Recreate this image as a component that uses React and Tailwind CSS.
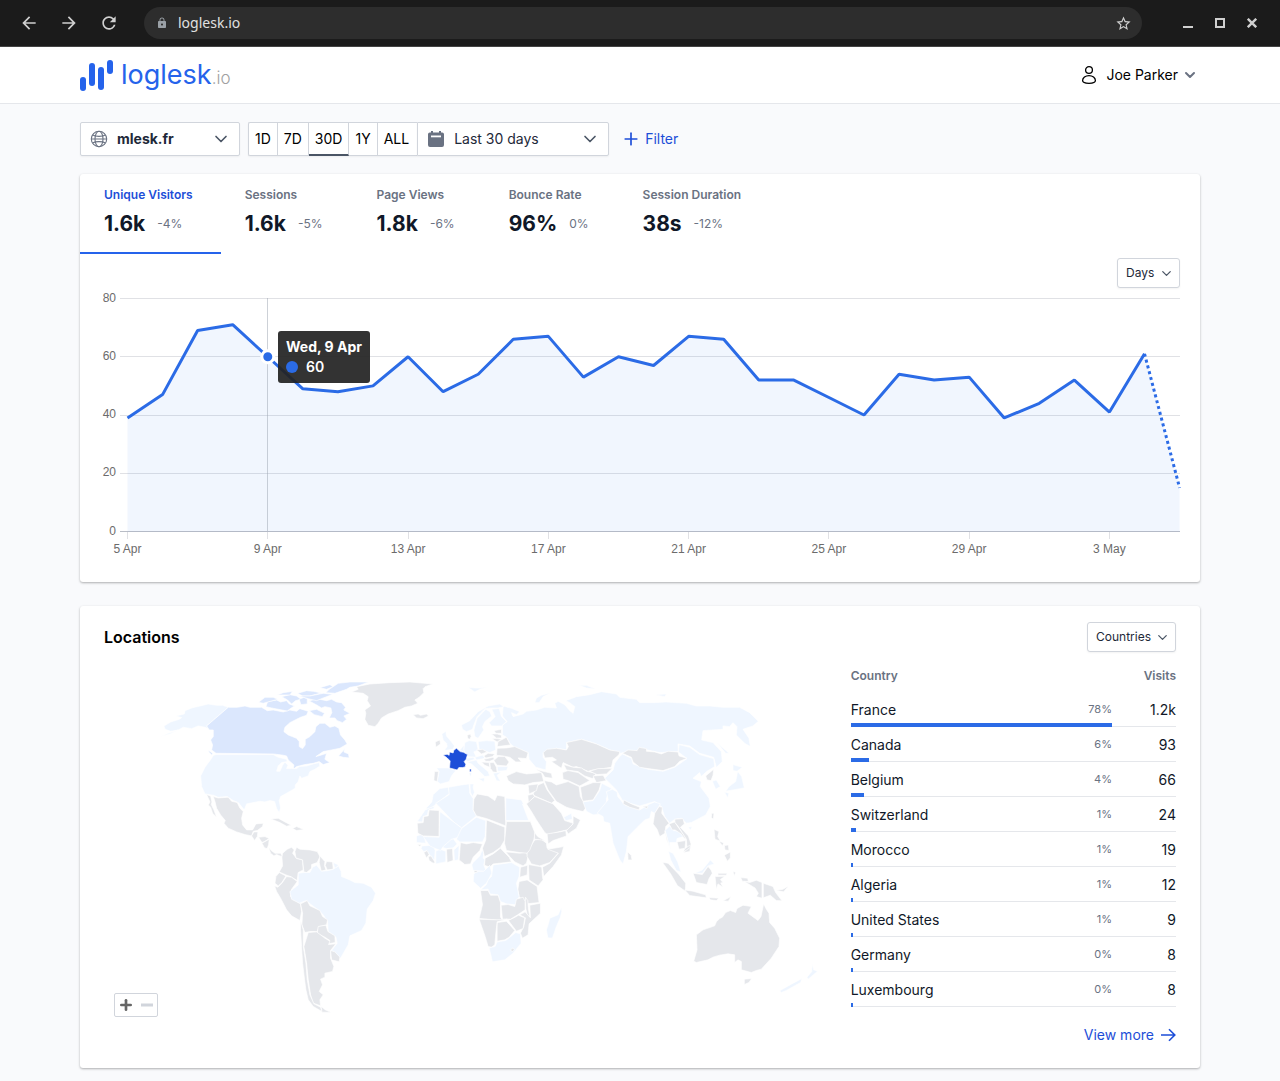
import React from 'react';
import { MdArrowBack, MdArrowForward, MdRefresh, MdLock, MdStarBorder } from 'react-icons/md';
import { ChevronDown, Plus } from 'lucide-react';

const metrics = [
  { label: 'Unique Visitors', value: '1.6k', change: '-4%' },
  { label: 'Sessions', value: '1.6k', change: '-5%' },
  { label: 'Page Views', value: '1.8k', change: '-6%' },
  { label: 'Bounce Rate', value: '96%', change: '0%' },
  { label: 'Session Duration', value: '38s', change: '-12%' },
];

const visitors = [
  39, 47, 69, 71, 60, 49, 48, 50, 60, 48, 54, 66, 67, 53, 60, 57, 67, 66, 52, 52, 46, 40, 54, 52, 53, 39, 44, 52, 41,
  61, 15,
];

const dateTicks = ['5 Apr', '9 Apr', '13 Apr', '17 Apr', '21 Apr', '25 Apr', '29 Apr', '3 May'];

const countries = [
  { name: 'France', percent: '78%', visits: '1.2k', bar: 100 },
  { name: 'Canada', percent: '6%', visits: '93', bar: 7 },
  { name: 'Belgium', percent: '4%', visits: '66', bar: 5 },
  { name: 'Switzerland', percent: '1%', visits: '24', bar: 2 },
  { name: 'Morocco', percent: '1%', visits: '19', bar: 1 },
  { name: 'Algeria', percent: '1%', visits: '12', bar: 1 },
  { name: 'United States', percent: '1%', visits: '9', bar: 1 },
  { name: 'Germany', percent: '0%', visits: '8', bar: 1 },
  { name: 'Luxembourg', percent: '0%', visits: '8', bar: 1 },
];

// Map fills, from no visits to most visits
const NONE = '#e5e7eb';
const LOW = '#eff6ff';
const MID = '#dbe7fd';
const HIGH = '#1d4ed8';

// Each region has its own origin, three units per map pixel
const regions = [
  {
    name: 'North America',
    x: 46,
    y: 6,
    shapes: [
      [LOW, 'M235 112 218 106 200 106 175 102 150 108 128 113 105 122 103 132 78 138 95 143 88 148 62 156 42 168 45 178 62 184 85 180 100 172 125 176 145 168 165 172 185 180 170 168Z'],
      [LOW, 'M32 200 55 190 85 180 60 192Z'],
      [MID, 'M235 112 262 112 285 108 300 112 335 112 352 122 370 120 400 126 420 120 440 124 450 116 475 124 470 136 452 142 440 148 420 158 405 172 402 185 415 195 440 205 448 215 448 230 458 236 466 225 466 208 480 200 495 185 498 170 510 160 525 160 540 172 555 168 567 175 572 195 585 210 592 222 570 235 545 240 520 245 498 260 515 255 530 250 525 268 540 278 520 284 508 275 490 280 465 284 440 290 430 298 432 285 415 270 410 258 395 255 370 252 198 250 185 240 188 225 182 210 190 200 190 180 178 180 170 168Z'],
      [MID, 'M566 258 575 248 585 236 582 246 596 252 598 264 580 262Z'],
      [MID, 'M174 240 188 250 186 256 178 248Z'],
      [MID, 'M478 93 500 86 530 92 545 88 560 96 575 98 587 112 582 120 600 130 582 138 590 148 578 158 562 152 555 144 538 144 546 128 543 114 525 110 515 114 502 106Z'],
      [MID, 'M353 95 380 90 392 96 410 92 418 102 434 108 424 114 412 123 385 118 365 114 348 110Z'],
      [MID, 'M326 97 345 82 370 82 384 88 357 95 340 100Z'],
      [MID, 'M395 80 420 74 440 78 454 88 437 92 425 102 413 90Z'],
      [MID, 'M448 88 462 82 472 86 472 102 453 104Z'],
      [MID, 'M382 75 400 68 428 64 420 75Z'],
      [MID, 'M443 70 470 62 490 64 514 69 480 78 458 78Z'],
      [MID, 'M448 78 480 78 520 70 549 73 520 84 500 92 475 86Z'],
      [MID, 'M510 53 540 44 550 50 530 58Z'],
      [MID, 'M538 58 565 40 600 36 656 36 625 48 600 52 590 58 555 70 528 68Z'],
      [MID, 'M478 122 500 118 524 130 517 140 493 134Z'],
      [NONE, 'M605 66 625 58 620 50 660 42 720 38 780 36 850 42 826 50 820 56 822 68 808 82 795 90 804 100 785 108 765 112 745 122 715 132 695 144 685 160 675 170 655 166 645 148 648 130 645 120 662 108 652 92 655 80 640 70Z'],
      [NONE, 'M790 134 805 132 812 136 830 132 836 138 820 146 800 144Z'],
      [LOW, 'M198 254 370 254 385 262 410 268 412 275 395 278 385 288 380 304 390 304 398 286 405 276 414 286 410 296 425 296 440 296 448 290 470 288 490 282 508 278 510 288 495 298 480 305 475 318 455 325 450 318 445 335 436 345 436 355 410 370 392 380 388 392 392 415 388 428 380 416 374 395 360 392 345 396 330 394 310 398 290 402 283 420 275 410 265 398 250 392 232 380 205 382 190 376 165 372 155 350 152 318 165 292 185 265 190 256Z'],
      [NONE, 'M190 380 205 384 235 382 245 394 262 398 270 415 280 425 275 445 278 465 290 480 308 480 318 462 340 460 338 470 322 482 310 484 305 498 285 494 260 486 235 475 222 460 226 452 212 435 200 415 195 395Z'],
      [NONE, 'M170 374 182 378 186 396 184 404 192 420 200 442 188 430 182 412 175 405 180 396Z'],
      [NONE, 'M305 498 312 486 324 486 322 500 314 512Z'],
      [NONE, 'M326 502 345 500 358 506 345 514 336 518Z'],
      [NONE, 'M336 520 358 508 356 524 352 536 344 534Z'],
      [NONE, 'M363 447 385 445 405 456 424 466 410 469 390 458Z'],
      [NONE, 'M428 476 440 470 462 479 440 482Z'],
    ],
  },
  {
    name: 'South America and southern Africa',
    x: 156,
    y: 166,
    shapes: [
      [NONE, 'M26 52 34 62 45 70 62 70 68 80 60 78 50 74 42 78 32 70Z'],
      [NONE, 'M66 82 68 70 82 58 95 52 103 60 98 70 110 86 128 90 130 120 115 128 112 152 92 140 78 135 58 126 68 108Z'],
      [NONE, 'M110 52 120 58 150 60 172 65 180 80 172 98 155 104 155 115 140 128 132 126 128 90 108 84 105 65Z'],
      [NONE, 'M180 78 195 95 194 108 198 120 184 124 178 98Z'],
      [NONE, 'M200 95 218 96 220 118 202 120 196 106Z'],
      [LOW, 'M220 98 236 105 225 118Z'],
      [NONE, 'M58 128 78 138 66 158 55 168 45 160 48 140Z'],
      [NONE, 'M44 168 54 172 66 160 80 140 95 142 112 155 95 178 92 200 112 215 122 222 125 245 120 272 95 258 80 240 62 205 50 185Z'],
      [LOW, 'M115 130 132 128 150 128 158 112 170 106 185 124 205 122 220 118 236 108 244 125 245 140 270 150 285 158 310 160 335 172 347 190 340 212 322 238 318 280 305 302 270 318 265 345 242 385 215 362 232 340 228 322 205 305 203 275 190 255 175 240 148 220 140 212 118 220 95 208 90 185 115 165Z'],
      [NONE, 'M122 222 142 212 150 228 180 242 188 260 203 270 200 285 178 290 172 305 150 305 135 308 126 285 128 250Z'],
      [NONE, 'M175 290 198 286 204 305 225 318 226 338 205 342 210 332 195 322 172 310Z'],
      [NONE, 'M212 362 225 366 240 382 238 396 215 390Z'],
      [NONE, 'M145 308 170 306 195 325 210 334 206 344 228 342 212 362 212 385 222 410 218 425 195 430 195 442 182 448 188 465 178 485 190 495 180 510 182 528 160 520 152 495 145 450 140 400 132 350Z'],
      [NONE, 'M122 272 130 300 130 350 138 400 142 450 150 495 162 522 182 532 186 545 160 530 145 510 138 480 134 450 128 400 125 350 122 300Z'],
      [NONE, 'M184 530 196 540 214 548 186 547Z'],
      [LOW, 'M470 18 484 14 494 20 498 40 470 38Z'],
      [NONE, 'M472 44 485 44 480 50Z'],
      [LOW, 'M486 48 520 46 526 62 524 92 510 76 500 62 492 66 484 56Z'],
      [NONE, 'M492 68 502 62 508 74 500 84Z'],
      [NONE, 'M505 80 514 78 526 98 520 100 508 92Z'],
      [LOW, 'M528 64 540 58 558 64 558 96 528 102Z'],
      [LOW, 'M545 52 560 35 580 26 592 42 580 54 560 56Z'],
      [NONE, 'M560 58 578 56 580 92 562 98Z'],
      [LOW, 'M582 60 598 46 596 90 584 92Z'],
      [NONE, 'M602 38 620 42 640 38 668 42 660 62 640 82 632 102 615 104 598 90 600 65Z'],
      [LOW, 'M640 98 660 78 668 58 672 70 670 85 676 88 672 105 680 125 640 122 636 105Z'],
      [NONE, 'M676 85 700 72 722 55 748 82 755 96 720 100 700 102 690 112 674 106Z'],
      [NONE, 'M738 66 780 70 800 66 805 80 800 100 790 108 765 96 750 80Z'],
      [NONE, 'M802 62 812 50 825 30 845 28 860 40 862 55 890 62 895 70 870 98 840 108 815 102 802 80Z'],
      [NONE, 'M864 58 912 50 905 75 880 110 852 140 848 112 870 100 896 70Z'],
      [NONE, 'M806 104 840 110 846 112 848 140 850 150 835 168 808 150Z'],
      [NONE, 'M782 112 804 106 802 135 780 142Z'],
      [NONE, 'M778 155 802 150 832 170 838 218 800 222 778 200 774 180Z'],
      [LOW, 'M700 105 725 102 755 98 780 112 778 140 770 160 778 200 768 225 740 222 722 215 715 195 690 192 685 178 662 180 680 164 684 150 695 140Z'],
      [LOW, 'M642 132 652 124 672 124 690 106 696 130 680 160 662 175 640 155Z'],
      [NONE, 'M643 122 652 122 652 128 643 128Z'],
      [NONE, 'M662 182 685 182 692 196 715 196 722 218 722 262 730 272 658 266 668 225Z'],
      [NONE, 'M724 226 745 224 765 230 770 208 790 202 796 215 796 240 775 254 752 268 728 268Z'],
      [NONE, 'M797 202 804 212 806 238 810 258 804 262 798 236Z'],
      [NONE, 'M810 226 842 220 842 250 808 282 805 315 788 325 782 310 792 290 797 264 780 255 796 246 812 264Z'],
      [NONE, 'M746 272 766 262 776 256 795 264 790 296 770 304Z'],
      [NONE, 'M712 278 740 274 765 302 748 322 735 330 712 334Z'],
      [NONE, 'M658 268 712 270 742 268 712 276 708 312 705 345 695 352 685 350 676 320Z'],
      [LOW, 'M688 354 706 350 712 336 738 332 768 308 782 312 784 340 760 370 735 390 698 396Z'],
      [NONE, 'M752 360 760 354 764 360 757 366Z'],
      [LOW, 'M905 232 895 255 870 265 866 282 860 300 864 324 878 325 890 290 902 262 906 245Z'],
    ],
  },
  {
    name: 'Europe, Russia and northern Africa',
    x: 306,
    y: 6,
    shapes: [
      [LOW, 'M280 108 305 115 330 125 320 134 305 128 310 140 340 132 350 124 380 120 405 112 440 114 435 100 445 94 465 104 480 122 490 130 495 110 480 98 468 92 500 80 540 74 575 65 620 72 630 82 680 88 690 98 730 98 770 96 830 100 860 108 900 108 940 112 990 112 1020 128 1046 154 1030 168 1000 178 1018 205 1022 230 1005 220 980 195 982 170 970 158 960 170 940 168 940 178 910 180 880 182 876 210 910 218 935 245 938 275 920 292 912 262 870 250 840 228 805 222 806 245 750 248 690 235 682 242 630 250 600 240 560 222 515 208 470 218 470 240 440 235 400 248 400 262 410 275 408 300 378 292 358 268 355 248 315 232 302 222 290 202 278 195 278 165 292 155 278 138Z'],
      [LOW, 'M375 98 380 84 395 76 424 68 400 80 388 98Z'],
      [LOW, 'M175 52 195 54 210 54 235 50 210 58 195 66Z'],
      [LOW, 'M508 46 530 46 560 58 530 54Z'],
      [LOW, 'M735 74 770 72 765 80Z'],
      [LOW, 'M155 165 180 152 205 125 235 108 270 102 282 110 265 114 245 114 225 116 202 140 192 165 188 178 170 185 158 178Z'],
      [LOW, 'M192 180 202 145 228 118 240 125 246 138 225 155 218 170 222 180 205 205 195 200Z'],
      [LOW, 'M246 118 268 115 275 140 290 155 275 168 245 168 238 158 256 140Z'],
      [NONE, 'M172 196 182 192 184 200 180 208 174 206Z'],
      [LOW, 'M96 192 108 184 110 198 124 215 134 228 130 238 103 242 112 230 110 220 100 210Z'],
      [NONE, 'M76 216 90 210 92 222 78 232Z'],
      [LOW, 'M150 240 162 226 164 248Z'],
      [LOW, 'M165 218 178 212 200 215 205 240 192 246 200 262 172 260 162 240Z'],
      [LOW, 'M205 215 230 212 255 214 258 240 240 248 208 238Z'],
      [LOW, 'M166 266 190 262 195 268 172 276Z'],
      [LOW, 'M195 262 220 255 225 265 200 270Z'],
      [LOW, 'M170 276 200 270 205 280 235 305 240 318 225 320 205 300 185 282Z'],
      [LOW, 'M205 326 225 324 222 336Z'],
      [LOW, 'M177 309 185 309 183 323Z'],
      [LOW, 'M80 294 115 294 138 302 125 318 118 335 92 342 82 335 88 305Z'],
      [NONE, 'M74 305 86 305 82 335 72 332Z'],
      [NONE, 'M245 192 262 192 275 196 275 204 260 204Z'],
      [NONE, 'M246 206 262 206 275 208 262 216Z'],
      [NONE, 'M253 182 275 178 275 190 258 190Z'],
      [NONE, 'M265 215 290 202 302 225 262 230Z'],
      [NONE, 'M200 240 218 238 232 246 215 252Z'],
      [NONE, 'M222 258 235 250 255 252 248 260 228 264Z'],
      [NONE, 'M222 268 250 262 254 268 240 274 228 274Z'],
      [NONE, 'M262 235 290 234 315 230 355 248 350 266 325 264 335 276 318 276 300 262 280 258 260 256Z'],
      [NONE, 'M252 272 265 260 285 260 298 276 290 288 262 286Z'],
      [NONE, 'M215 276 238 278 240 292 225 286Z'],
      [NONE, 'M240 278 252 278 260 292 262 308 250 306 242 296Z'],
      [LOW, 'M262 290 295 290 290 302 264 304Z'],
      [LOW, 'M250 310 275 306 262 316 272 335 260 332Z'],
      [HIGH, 'M100 255 112 253 118 256 119 246 130 249 132 241 140 235 151 245 161 247 173 254 169 268 163 275 168 283 166 291 158 293 147 293 142 300 119 294 121 273 112 264Z'],
      [HIGH, 'M179 297 184 297 184 306 179 305Z'],
      [NONE, 'M290 318 320 305 350 312 395 308 402 335 370 338 345 345 310 342 295 332Z'],
      [NONE, 'M378 298 400 304 425 310 428 325 405 322 398 310Z'],
      [NONE, 'M400 248 412 238 440 235 470 240 476 230 470 218 515 208 560 222 600 240 630 245 628 254 610 270 605 292 580 296 550 300 535 304 500 290 490 292 460 278 455 295 425 275 440 270 428 262 405 264Z'],
      [NONE, 'M462 284 490 292 515 294 530 304 560 310 548 326 525 318 505 305 470 300Z'],
      [NONE, 'M458 308 475 302 505 308 540 332 510 348 475 332 460 328Z'],
      [NONE, 'M540 304 565 296 608 295 590 312 562 314Z'],
      [NONE, 'M550 318 580 316 590 332 560 338Z'],
      [NONE, 'M512 352 550 338 574 338 568 360 550 390 518 394Z'],
      [NONE, 'M403 332 425 336 440 345 475 335 508 350 512 380 530 412 520 425 490 418 470 412 440 395 415 360Z'],
      [NONE, 'M385 345 402 338 412 360 435 392 425 400 375 378 370 372Z'],
      [NONE, 'M355 346 385 342 380 362 358 372Z'],
      [NONE, 'M354 376 370 372 374 380 356 398Z'],
      [NONE, 'M350 402 375 380 400 390 430 402 455 430 465 452 490 460 480 478 450 485 415 495 405 488 380 450 365 425Z'],
      [NONE, 'M412 492 450 486 468 482 470 498 430 512 415 522Z'],
      [NONE, 'M470 482 490 462 490 438 512 450 500 475 475 492Z'],
      [LOW, 'M462 442 485 430 488 448 468 452Z'],
      [LOW, 'M530 424 520 396 550 392 570 362 576 340 605 355 590 385 590 410 575 432 550 435Z'],
      [LOW, 'M90 356 115 352 120 370 78 402 60 420 48 416 66 396 70 374Z'],
      [LOW, 'M22 455 46 420 74 408 72 416 56 420 52 436 40 440 38 456Z'],
      [LOW, 'M78 400 118 374 116 352 155 345 178 342 180 370 190 386 190 420 200 438 155 474 130 455Z'],
      [LOW, 'M180 342 192 342 190 352 194 368 188 380 182 368Z'],
      [NONE, 'M202 372 235 378 255 392 262 376 285 380 288 468 230 446 200 438 190 420 192 388Z'],
      [LOW, 'M288 384 335 390 345 410 338 402 357 452 288 452Z'],
      [NONE, 'M22 460 40 458 42 440 55 438 58 420 88 422 88 500 40 498 24 490Z'],
      [LOW, 'M90 425 155 474 155 500 125 508 100 530 92 542 72 534 60 528 40 500 88 502Z'],
      [LOW, 'M155 476 200 442 228 452 226 500 218 516 150 516 140 508Z'],
      [NONE, 'M230 450 285 472 285 510 272 532 250 548 224 560 218 535 228 510Z'],
      [NONE, 'M290 455 362 455 376 490 372 510 360 540 352 550 330 548 290 542 284 520Z'],
      [NONE, 'M374 488 384 500 408 514 394 510 374 508Z'],
    ],
  },
  {
    name: 'East Asia',
    x: 496,
    y: 6,
    shapes: [
      [LOW, 'M68 252 95 265 100 282 145 298 190 304 225 292 262 266 236 246 238 224 270 232 300 254 342 266 345 290 322 304 304 320 300 308 280 325 305 335 302 350 328 385 332 410 318 435 275 458 260 460 245 445 225 448 210 460 195 440 185 410 165 395 120 408 70 395 50 360 15 325 40 300 45 280 60 260Z'],
      [NONE, 'M68 250 85 240 112 242 118 232 140 236 140 244 165 246 185 252 205 244 235 246 238 258 262 265 240 274 225 290 190 302 145 296 120 292 100 276 95 262Z'],
      [LOW, 'M10 440 -8 430 25 390 20 365 38 358 52 366 54 380 75 405 120 420 150 402 165 396 182 402 165 430 155 425 150 445 135 450 115 470 85 500 80 545 70 582 60 570 40 520 30 460 12 455Z'],
      [NONE, 'M72 390 95 402 120 412 118 420 90 412 70 402Z'],
      [NONE, 'M128 410 145 408 142 416Z'],
      [NONE, 'M165 430 178 410 188 412 186 430 208 460 198 470 196 490 180 500 172 478 160 462Z'],
      [LOW, 'M196 482 210 468 222 482 240 484 252 500 232 506 230 518 210 518 212 540Z'],
      [NONE, 'M208 462 225 456 234 470 256 500 258 510 244 492 226 480 218 480Z'],
      [NONE, 'M225 448 250 446 254 462 242 472 266 498 274 522 270 545 252 548 262 536 260 508 236 470 226 458Z'],
      [NONE, 'M232 516 258 512 256 535 238 538Z'],
      [NONE, 'M318 318 342 298 340 316 334 332 322 330Z'],
      [LOW, 'M338 334 350 330 362 350 348 358Z'],
      [LOW, 'M352 218 388 250 378 250Z'],
      [LOW, 'M400 284 428 292 412 304 400 302Z'],
      [LOW, 'M414 304 426 320 434 354 400 360 378 364 388 350 408 335Z'],
      [LOW, 'M374 366 388 370 384 384Z'],
      [NONE, 'M336 430 343 430 341 448 335 443Z'],
      [LOW, 'M266 472 278 470 272 480Z'],
      [NONE, 'M343 478 358 485 354 500 362 514 346 508Z'],
    ],
  },
  {
    name: 'Oceania',
    x: 496,
    y: 156,
    shapes: [
      [NONE, 'M84 96 94 106 97 120 85 120Z'],
      [NONE, 'M196 34 206 70 210 82 200 58Z'],
      [NONE, 'M358 63 372 69 368 78Z'],
      [NONE, 'M374 77 386 75 388 92 376 90Z'],
      [NONE, 'M374 106 392 96 392 114 383 124Z'],
      [NONE, 'M250 98 256 86 270 76 272 82Z'],
      [LOW, 'M206 94 220 100 234 126 244 157 230 152 213 120Z'],
      [NONE, 'M188 127 205 130 237 163 258 190 257 214 233 197 213 162Z'],
      [NONE, 'M255 210 280 214 318 225 320 234 270 227Z'],
      [NONE, 'M328 233 358 235 350 242 332 240Z'],
      [NONE, 'M370 243 394 230 386 244Z'],
      [LOW, 'M286 160 308 150 332 120 344 132 325 138 308 160Z'],
      [NONE, 'M280 160 308 164 325 140 334 150 338 160 328 176 322 194 290 188Z'],
      [NONE, 'M346 170 376 169 362 179 370 188 363 189 370 202 355 192 350 208Z'],
      [NONE, 'M355 160 382 160 380 166 355 166Z'],
      [NONE, 'M400 155 408 157 404 168Z'],
      [NONE, 'M423 173 444 175 446 185 428 184Z'],
      [NONE, 'M434 185 450 188 470 181 487 188 487 235 470 230 476 220 466 204Z'],
      [NONE, 'M491 190 520 200 528 218 547 243 530 242 512 226 491 234Z'],
      [NONE, 'M528 211 550 208 567 198 552 216Z'],
      [NONE, 'M290 345 310 330 345 318 350 306 360 296 368 292 378 278 392 272 408 278 412 266 430 256 455 260 445 280 475 302 484 290 492 252 500 268 508 280 510 308 525 325 540 355 538 380 515 415 485 448 470 452 455 458 425 450 425 425 415 420 405 428 405 405 385 402 360 406 340 412 325 420 290 428 282 424 292 390Z'],
      [NONE, 'M434 478 456 476 448 488 434 494Z'],
      [LOW, 'M638 432 642 450 654 454 640 466 626 478 622 472 636 456Z'],
      [LOW, 'M540 513 575 493 607 476 603 488 560 512 545 518Z'],
    ],
  },
];

const toX = (day) => 47.5 + day * 35.07;
const toY = (count) => 241.5 - count * 2.9125;

const toPath = (from, to) =>
  visitors
    .slice(from, to + 1)
    .map((count, i) => `${i === 0 ? 'M' : 'L'}${toX(from + i)} ${toY(count)}`)
    .join(' ');

const BrowserBar = () => (
  <div className="flex items-center h-[47px] px-[19px] bg-[#1b1b1b] border-b border-[#444444] text-[#d0d0d0]">
    <div className="flex items-center gap-5">
      <button type="button" aria-label="Back">
        <MdArrowBack size={20} />
      </button>
      <button type="button" aria-label="Forward">
        <MdArrowForward size={20} />
      </button>
      <button type="button" aria-label="Reload">
        <MdRefresh size={20} />
      </button>
    </div>
    <div className="flex flex-1 items-center gap-2.5 h-8 ml-[25px] pl-3 pr-2.5 rounded-full bg-[#2d2d2d]">
      <MdLock size={12} className="text-[#9aa0a6]" />
      <input
        type="text"
        aria-label="Address"
        defaultValue="loglesk.io"
        className="flex-1 min-w-0 bg-transparent text-sm text-[#e0e0e0] font-['Noto_Sans',sans-serif] focus:outline-none"
      />
      <button type="button" aria-label="Bookmark">
        <MdStarBorder size={17} />
      </button>
    </div>
    <div className="flex items-center gap-[22px] ml-[41px] mr-1">
      <button type="button" aria-label="Minimize">
        <svg width="10" height="10" viewBox="0 0 10 10" fill="currentColor">
          <rect y="8" width="10" height="2" />
        </svg>
      </button>
      <button type="button" aria-label="Maximize">
        <svg width="10" height="10" viewBox="0 0 10 10" fill="none" stroke="currentColor" strokeWidth="2">
          <rect x="1" y="1" width="8" height="8" />
        </svg>
      </button>
      <button type="button" aria-label="Close">
        <svg width="10" height="10" viewBox="0 0 10 10" stroke="currentColor" strokeWidth="2.4">
          <path d="M0.8 0.8 9.2 9.2M9.2 0.8 0.8 9.2" />
        </svg>
      </button>
    </div>
  </div>
);

const Logo = () => (
  <a href="#" className="flex items-center gap-2">
    <svg width="33" height="31" viewBox="0 0 33 31" fill="#2563eb" aria-hidden="true">
      <rect x="0" y="17" width="6" height="14" rx="3" />
      <rect x="9" y="3" width="6" height="23" rx="3" />
      <rect x="18" y="7" width="6" height="23" rx="3" />
      <rect x="27" y="0" width="6" height="14" rx="3" />
    </svg>
    <span className="flex items-baseline pt-0.5 text-[27px] leading-8 text-[#2563eb]">
      loglesk
      <span className="text-[17px] leading-8 font-light text-neutral-400">.io</span>
    </span>
  </a>
);

const Header = () => (
  <header className="bg-white border-b border-gray-200">
    <div className="flex items-center justify-between h-14 max-w-[1120px] mx-auto">
      <Logo />
      <button type="button" className="flex items-center pr-0.5 text-sm text-black">
        <svg
          width="18"
          height="20"
          viewBox="0 0 18 20"
          fill="none"
          stroke="currentColor"
          strokeWidth="1.3"
          className="mr-2"
        >
          <circle cx="9" cy="5" r="3.4" />
          <path d="M9 10.6c-3.600 0-6.400 2.200-6.400 5 0 1.900 2.400 2.800 6.400 2.800s6.400-.9 6.400-2.800c0-2.800-2.800-5-6.400-5Z" />
        </svg>
        <span className="mr-1">Joe Parker</span>
        <ChevronDown size={16} strokeWidth={3} className="text-gray-500" />
      </button>
    </div>
  </header>
);

const GlobeIcon = () => (
  <svg width="18" height="18" viewBox="0 0 18 18" fill="none" stroke="currentColor" strokeWidth="1.1">
    <circle cx="9" cy="9" r="7.700" />
    <ellipse cx="9" cy="9" rx="4" ry="7.700" />
    <path d="M2.600 5c3 1.800 9.800 1.800 12.800 0M2.600 13c3-1.800 9.800-1.800 12.800 0M1.300 9h15.400" />
  </svg>
);

const CalendarIcon = () => (
  <svg width="18" height="18" viewBox="0 0 18 18" fill="currentColor">
    <path d="M4 1h2v1.500h6V1h2v1.500h1.200a1.800 1.800 0 0 1 1.800 1.800V15a2 2 0 0 1-2 2H3a2 2 0 0 1-2-2V4.300a1.800 1.800 0 0 1 1.800-1.800H4Z" />
    <path d="M4 5.500h10v1.800H4Z" fill="#ffffff" />
  </svg>
);

const Select = ({ label, options, icon, className, chevronClass, chevronSize = 20 }) => (
  <div className="relative flex items-center">
    {icon && <span className="absolute left-2.5 text-gray-500 pointer-events-none">{icon}</span>}
    <select aria-label={label} className={`appearance-none bg-white border border-gray-300 shadow-xs ${className}`}>
      {options.map((option) => (
        <option key={option}>{option}</option>
      ))}
    </select>
    <ChevronDown
      size={chevronSize}
      className={`absolute text-gray-600 pointer-events-none ${chevronClass}`}
    />
  </div>
);

const Filters = () => (
  <div className="flex items-center">
    <Select
      label="Site"
      options={['mlesk.fr']}
      icon={<GlobeIcon />}
      className="w-40 h-[34px] pl-9 pr-8 rounded-xs text-sm font-bold text-gray-800"
      chevronClass="right-[9px]"
    />
    <div className="flex ml-2">
      <div className="flex h-[34px] bg-white border border-r-0 border-gray-300 rounded-l-xs shadow-xs text-sm text-black divide-x divide-gray-300">
        {['1D', '7D', '30D', '1Y', 'ALL'].map((range) => (
          <button
            key={range}
            type="button"
            className={`px-1.5 ${range === '30D' ? 'h-[33px] pt-px border-b-2 border-b-gray-600' : 'h-8'} ${range === 'ALL' ? 'pr-2' : ''}`}
          >
            {range}
          </button>
        ))}
      </div>
      <Select
        label="Period"
        options={['Last 30 days']}
        icon={<CalendarIcon />}
        className="w-48 h-[34px] pl-9 pr-8 rounded-r-xs text-sm text-gray-800"
        chevronClass="right-[9px]"
      />
    </div>
    <button type="button" className="flex items-center gap-1 ml-3 text-sm text-[#1d4ed8]">
      <Plus size={20} />
      Filter
    </button>
  </div>
);

const MetricTabs = () => (
  <div className="flex">
    {metrics.map((metric, index) => (
      <button
        key={metric.label}
        type="button"
        className={`pl-6 pr-7 py-3 border-b-2 text-left ${index === 0 ? 'border-[#2563eb]' : 'border-transparent'}`}
      >
        <span
          className={`block text-xs leading-[18px] font-semibold ${index === 0 ? 'text-[#1d4ed8]' : 'text-gray-500'}`}
        >
          {metric.label}
        </span>
        <span className="flex items-center gap-3 mt-1.5 mb-0.5 pr-0.5">
          <span className="text-[21px] leading-7 font-bold text-gray-900">{metric.value}</span>
          <span className="text-xs text-gray-500">{metric.change}</span>
        </span>
      </button>
    ))}
  </div>
);

const VisitorsChart = () => {
  const last = visitors.length - 1;

  return (
    <div className="relative">
      <svg viewBox="0 0 1120 292" className="block w-full" role="img" aria-label="Unique visitors per day">
        {[80, 60, 40, 20, 0].map((count) => (
          <g key={count}>
            <line
              x1="40"
              x2="1100"
              y1={Math.floor(toY(count)) + 0.5}
              y2={Math.floor(toY(count)) + 0.5}
              stroke={count === 0 ? '#b9bdc6' : '#e0e1e5'}
            />
            <text
              x="36"
              y={toY(count) + 3}
              textAnchor="end"
              className="text-xs fill-[#6b6b6b] font-['Liberation_Sans',sans-serif]"
            >
              {count}
            </text>
          </g>
        ))}
        {dateTicks.map((tick, i) => (
          <g key={tick}>
            <line
              x1={Math.floor(toX(i * 4)) + 0.5}
              x2={Math.floor(toX(i * 4)) + 0.5}
              y1="242"
              y2="249"
              stroke="#e0e1e5"
            />
            <text
              x={toX(i * 4)}
              y="263"
              textAnchor="middle"
              className="text-xs fill-[#6b6b6b] font-['Liberation_Sans',sans-serif]"
            >
              {tick}
            </text>
          </g>
        ))}
        <path d={`${toPath(0, last)} L${toX(last)} ${toY(0)} L${toX(0)} ${toY(0)}Z`} fill="#3b82f6" fillOpacity="0.07" />
        <line x1="187.5" x2="187.5" y1="8" y2="241" stroke="#9ca3af" strokeOpacity="0.5" />
        <path d={toPath(0, last - 1)} fill="none" stroke="#2b6be6" strokeWidth="3" strokeLinejoin="bevel" />
        <path d={toPath(last - 1, last)} fill="none" stroke="#2b6be6" strokeWidth="3" strokeDasharray="3 3" />
        <circle cx={toX(4)} cy={toY(60)} r="6" fill="#2b6be6" stroke="#ffffff" strokeWidth="3" />
      </svg>
      <div className="absolute top-[41px] left-[198px] px-2 py-1.5 rounded-[3px] bg-[#222222]/92 text-sm text-white">
        <p className="font-bold">Wed, 9 Apr</p>
        <p className="flex items-center gap-2 font-semibold">
          <span className="size-3 rounded-full bg-[#2b6be6]" />
          60
        </p>
      </div>
    </div>
  );
};

const WorldMap = () => (
  <div className="relative">
    <svg viewBox="0 0 715 360" className="block w-full" role="img" aria-label="Visits by country">
      {regions.map((region) => (
        <g key={region.name} transform={`translate(${region.x} ${region.y}) scale(0.3333)`}>
          {region.shapes.map(([fill, d]) => (
            <path key={d} d={d} fill={fill} stroke="#ffffff" strokeWidth="2" strokeLinejoin="round" />
          ))}
        </g>
      ))}
    </svg>
    <div className="absolute bottom-[7px] left-2.5 flex items-center h-6 w-11 bg-white border border-gray-300 rounded-xs">
      <button type="button" aria-label="Zoom in" className="flex flex-1 justify-center text-[#666666]">
        <Plus size={16} strokeWidth={4} />
      </button>
      <button type="button" aria-label="Zoom out" className="flex flex-1 justify-center text-gray-300">
        <svg width="12" height="12" viewBox="0 0 12 12" fill="currentColor">
          <rect y="4.500" width="12" height="3" />
        </svg>
      </button>
    </div>
  </div>
);

const CountryTable = () => (
  <table className="w-full text-sm text-gray-900">
    <thead>
      <tr className="h-7 text-xs text-gray-500">
        <th className="p-0 pb-1 text-left font-semibold">Country</th>
        <th className="p-0 pb-1 w-16 text-right font-semibold">Visits</th>
      </tr>
    </thead>
    <tbody>
      {countries.map((country) => (
        <tr key={country.name} className="border-b border-gray-200">
          <td className="p-0">
            <div className="relative flex items-center justify-between h-[34px] pt-0.5">
              <span>{country.name}</span>
              <span className="text-[11px] text-gray-500">{country.percent}</span>
              <span className="absolute left-0 -bottom-px h-1 bg-[#2b6be6]" style={{ width: `${country.bar}%` }} />
            </div>
          </td>
          <td className="p-0 pt-0.5 text-right">{country.visits}</td>
        </tr>
      ))}
    </tbody>
  </table>
);

const smallSelect = 'h-[30px] pl-2 rounded-[3px] text-xs text-gray-800';
const card = 'bg-white rounded-[3px] shadow-[0_1px_3px_rgba(0,0,0,0.16),0_1px_2px_rgba(0,0,0,0.16)]';

export default function App() {
  return (
    <div className="min-h-screen pb-3 bg-[#f9fafc] font-['Inter',sans-serif]">
      <BrowserBar />
      <Header />
      <main className="max-w-[1120px] mx-auto pt-[18px]">
        <Filters />

        <section className={`mt-[18px] ${card}`}>
          <MetricTabs />
          <div className="flex justify-end pt-1 pb-0.5 pr-5">
            <Select
              label="Interval"
              options={['Days']}
              className={`w-[63px] ${smallSelect}`}
              chevronClass="right-1.5"
              chevronSize={15}
            />
          </div>
          <VisitorsChart />
        </section>

        <section className={`mt-6 px-6 pt-4 pb-[23px] ${card}`}>
          <div className="flex items-center justify-between">
            <h2 className="text-base font-semibold text-black">Locations</h2>
            <Select
              label="Location type"
              options={['Countries']}
              className={`w-[89px] ${smallSelect}`}
              chevronClass="right-1.5"
              chevronSize={15}
            />
          </div>
          <div className="flex mt-3">
            <div className="w-2/3">
              <WorldMap />
            </div>
            <div className="w-1/3 pl-8">
              <CountryTable />
              <div className="flex justify-end mt-[18px]">
                <a href="#" className="flex items-center gap-1.5 text-sm text-[#1d4ed8]">
                  View more
                  <svg width="16" height="16" viewBox="0 0 16 16" fill="none" stroke="currentColor" strokeWidth="1.600">
                    <path d="M1 8h13.500M9 2.200 14.800 8 9 13.800" />
                  </svg>
                </a>
              </div>
            </div>
          </div>
        </section>
      </main>
    </div>
  );
}
